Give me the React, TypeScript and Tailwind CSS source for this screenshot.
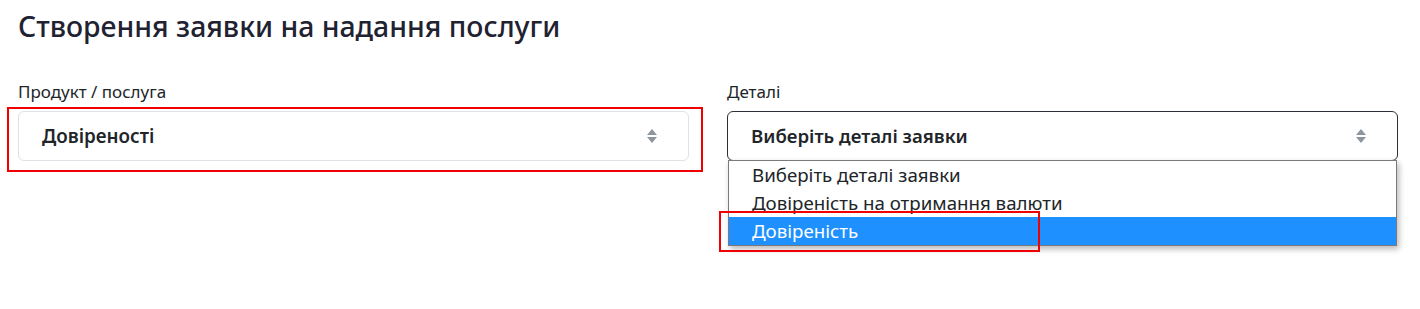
import React from 'react';

function SortArrows() {
  return (
    <svg width="10" height="14" viewBox="0 0 10 14" className="shrink-0">
      <path d="M5 0 L10 6 H0 Z" fill="#8d969e" />
      <path d="M0 8 H10 L5 14 Z" fill="#8d969e" />
    </svg>
  );
}

const options = ['Виберіть деталі заявки', 'Довіреність на отримання валюти', 'Довіреність'];

export default function App() {
  return (
    <div className="min-h-screen bg-white text-[#212529]" style={{ fontFamily: '"Noto Sans", sans-serif' }}>
      <div className="pl-[18px] pr-[22px]">
        <h1 className="mt-[9px] text-[28.4px] font-medium leading-[1.2] text-[#1f2231]">
          Створення заявки на надання послуги
        </h1>

        <div className="mt-[37px] grid grid-cols-2 gap-[38px]">
          {/* product */}
          <div>
            <label className="mb-[7px] block text-[17px] leading-6">Продукт / послуга</label>
            <div className="relative">
              <div className="flex h-[50px] items-center justify-between rounded-md border border-[#dee2e6] bg-white pl-[23px] pr-[31px]">
                <span className="text-[18.8px] font-semibold">Довіреності</span>
                <SortArrows />
              </div>
              <div className="pointer-events-none absolute -bottom-[11px] -left-[11px] -right-[14px] -top-[4px] border-2 border-[#f00000]" />
            </div>
          </div>

          {/* details */}
          <div>
            <label className="mb-[7px] block text-[17px] leading-6">Деталі</label>
            <div className="relative">
              <div className="flex h-[50px] items-center justify-between rounded-md border border-[#2b3036] bg-white pl-[23px] pr-[31px]">
                <span className="text-[18.6px] font-semibold">Виберіть деталі заявки</span>
                <SortArrows />
              </div>
              <ul className="absolute left-[1px] right-[1px] top-[49px] border border-[#7a7a7a] bg-white shadow-[2px_3px_6px_rgba(0,0,0,0.28)]">
                {options.map((o, i) => (
                  <li
                    key={o}
                    className={
                      i === 2
                        ? 'flex h-[28px] items-center bg-[#1e90ff] pl-[23px] text-[18.7px] text-white'
                        : 'flex h-[28px] items-center pl-[23px] text-[18.7px] text-[#212529]'
                    }
                  >
                    {o}
                  </li>
                ))}
              </ul>
              <div className="pointer-events-none absolute -left-[8px] top-[100px] h-[41px] w-[321px] border-2 border-[#f00000]" />
            </div>
          </div>
        </div>
      </div>
    </div>
  );
}
